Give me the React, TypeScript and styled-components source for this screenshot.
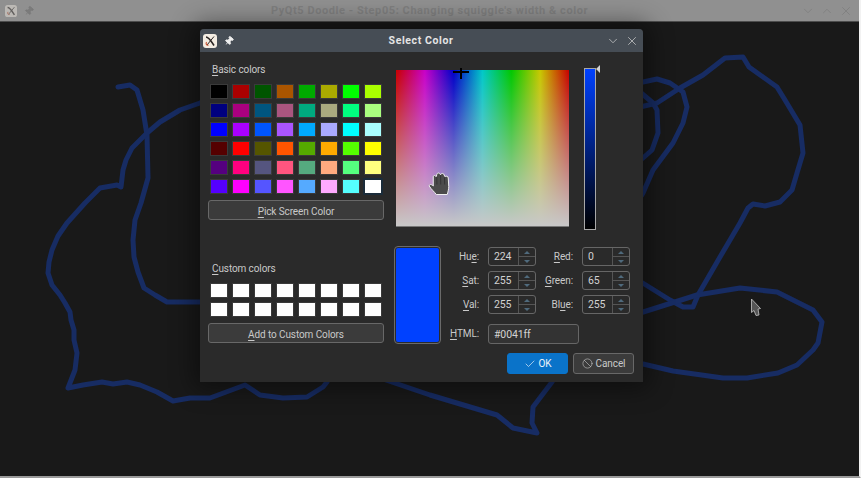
import React from 'react'
import styled, { createGlobalStyle } from 'styled-components'
import { Ban, Check, ChevronDown, ChevronUp, Pin, X } from 'lucide-react'

const GlobalStyle = createGlobalStyle`
  html, body {
    margin: 0;
    padding: 0;
    background: #191919;
    font-family: Roboto, "Liberation Sans", sans-serif;
  }
`

const Page = styled.div`
  width: 861px;
  height: 478px;
  box-sizing: border-box;
  display: flex;
  flex-direction: column;
  overflow: hidden;
  border-right: 2px solid #f2f2f2;
  border-bottom: 2px solid #9a9a9a;
`

const MainBar = styled.div`
  height: 22px;
  flex: none;
  box-sizing: border-box;
  display: grid;
  grid-template-columns: 1fr auto 1fr;
  align-items: center;
  padding: 0 5px;
  background: #909090;
  border-bottom: 1px solid #4d4d4d;
`

const BarLeft = styled.div`
  display: flex;
  align-items: center;
  gap: 7px;
`

const BarRight = styled.div`
  display: flex;
  justify-content: flex-end;
  gap: 5px;
  color: #7b7b7b;
  padding-right: 1px;
`

const MainTitle = styled.div`
  font-size: 11px;
  font-weight: 700;
  letter-spacing: 0.57px;
  color: #7f7f7f;
  white-space: nowrap;
`

const Canvas = styled.div`
  position: relative;
  flex: 1;
  background: #191919;
`

const Scribble = styled.svg`
  position: absolute;
  inset: 0;
  width: 100%;
  height: 100%;
  fill: none;
  stroke: #172c63;
  stroke-width: 5;
  stroke-linejoin: round;
  stroke-linecap: round;
`

const ArrowCursor = styled.svg`
  position: absolute;
  left: 750px;
  top: 276px;
  width: 12px;
  height: 19px;
`

const Dialog = styled.div`
  position: absolute;
  left: 200px;
  top: 7px;
  width: 443px;
  height: 353px;
  background: #2a2a2a;
  border-radius: 4px 4px 0 0;
  box-shadow: 0 0 24px 6px rgba(0, 0, 0, 0.45);
  color: #c9c9c9;
  font-size: 10px;
  letter-spacing: -0.1px;
`

const DialogBar = styled.div`
  height: 23px;
  display: grid;
  grid-template-columns: 1fr auto 1fr;
  align-items: center;
  padding: 0 4px 0 3px;
  background: #464d55;
  border-radius: 4px 4px 0 0;
`

const DialogTitle = styled.div`
  font-size: 10.5px;
  font-weight: 700;
  letter-spacing: 0.6px;
  color: #e4e4e4;
`

const DialogButtons = styled.div`
  display: flex;
  justify-content: flex-end;
  gap: 5px;
  color: #d6d6d6;
`

const DialogBody = styled.div`
  display: flex;
  gap: 10px;
  padding-left: 8px;
`

const LeftColumn = styled.div`
  width: 176px;
  display: flex;
  flex-direction: column;
  padding-top: 10px;
`

const GroupLabel = styled.div<{ $top?: number }>`
  height: 14px;
  line-height: 15px;
  padding-left: 4px;
  margin-top: ${(p) => p.$top ?? 0}px;
  margin-bottom: 9px;
`

const SwatchGrid = styled.div`
  display: grid;
  grid-template-columns: repeat(8, 16px);
  grid-auto-rows: 13px;
  gap: 6px;
  padding-left: 3px;
`

const Swatch = styled.div<{ $color: string; $selected?: boolean }>`
  background: ${(p) => p.$color};
  outline: ${(p) => (p.$selected ? '2px solid #1b2c3a' : 'none')};
  box-shadow: 0 0 0 1px rgba(255, 255, 255, 0.08);
`

const PushButton = styled.div<{ $top: number }>`
  height: 20px;
  box-sizing: border-box;
  margin-top: ${(p) => p.$top}px;
  display: flex;
  align-items: center;
  justify-content: center;
  padding-top: 2px;
  background: #3b3b3b;
  border: 1px solid #686868;
  border-radius: 3px;
`

const Mn = styled.span`
  text-decoration: underline;
  text-underline-offset: 2px;
  text-decoration-thickness: 1px;
`

const RightColumn = styled.div`
  width: 240px;
  padding-top: 16px;
`

const PickerRow = styled.div`
  height: 162px;
  display: flex;
  padding-left: 2px;
`

const Field = styled.div`
  position: relative;
  width: 173px;
  height: 157px;
  margin-top: 2px;
  box-sizing: border-box;
  border-bottom: 1px solid #777;
  background: linear-gradient(to bottom, rgba(200, 200, 200, 0) 0%, #c8c8c8 100%),
    linear-gradient(
      to right,
      #c80000 0%,
      #c800c8 16.66%,
      #0000c8 33.33%,
      #00c8c8 50%,
      #00c800 66.66%,
      #c8c800 83.33%,
      #c80000 100%
    );
`

const Crosshair = styled.div`
  position: absolute;
  left: 57px;
  top: -2px;
  width: 16px;
  height: 11px;

  &::before,
  &::after {
    content: '';
    position: absolute;
    background: #000;
  }
  &::before {
    left: 0;
    right: 0;
    top: 3px;
    height: 2px;
  }
  &::after {
    left: 7px;
    top: 0;
    bottom: 0;
    width: 2px;
  }
`

const HandCursor = styled.svg`
  position: absolute;
  left: 32px;
  top: 102px;
  width: 22px;
  height: 23px;
`

const ValueBar = styled.div`
  position: relative;
  width: 12px;
  height: 162px;
  box-sizing: border-box;
  margin-left: 15px;
  border: 1px solid #a8a8a8;
  background: linear-gradient(to bottom, #0041ff 0%, #000 100%);

  &::after {
    content: '';
    position: absolute;
    right: -5px;
    top: -4px;
    border-style: solid;
    border-width: 4px 4px 4px 0;
    border-color: transparent #d4d4d4 transparent transparent;
  }
`

const MiddleRow = styled.div`
  display: flex;
  gap: 9px;
  margin-top: 16px;
`

const Preview = styled.div`
  width: 47px;
  height: 98px;
  box-sizing: border-box;
  background: #0041ff;
  border: 2px solid #2a2a2a;
  outline: 1px solid #6a6a6a;
  outline-offset: -1px;
  border-radius: 4px;
`

const Fields = styled.div`
  display: grid;
  grid-template-columns: 29px 48px 28px 48px;
  grid-auto-rows: 19px;
  column-gap: 9px;
  row-gap: 5px;
  margin-top: 1px;
`

const FieldLabel = styled.div<{ $nudge?: boolean }>`
  justify-self: end;
  align-self: center;
  white-space: nowrap;
  margin-top: ${(p) => (p.$nudge ? 10 : 0)}px;
`

const Spin = styled.div`
  display: flex;
  box-sizing: border-box;
  border: 1px solid #666;
  border-radius: 3px;
`

const SpinValue = styled.div`
  flex: 1;
  display: flex;
  align-items: center;
  padding-left: 5px;
  color: #d2d2d2;
  font-size: 10.5px;
`

const SpinArrows = styled.div`
  width: 16px;
  display: flex;
  flex-direction: column;
  border-left: 1px solid #555;
`

const SpinArrow = styled.div<{ $down?: boolean }>`
  flex: 1;
  display: flex;
  align-items: center;
  justify-content: center;
  border-top: ${(p) => (p.$down ? '1px solid #555' : 'none')};

  &::after {
    content: '';
    border-left: 3px solid transparent;
    border-right: 3px solid transparent;
    ${(p) => (p.$down ? 'border-top: 3px solid #4f6a7d;' : 'border-bottom: 3px solid #4f6a7d;')}
  }
`

const HtmlInput = styled.div`
  grid-column: span 3;
  width: 91px;
  height: 20px;
  margin-top: 5px;
  box-sizing: border-box;
  display: flex;
  align-items: center;
  padding-left: 5px;
  background: #333;
  border: 1px solid #666;
  border-radius: 3px;
  color: #d2d2d2;
  font-size: 10.5px;
`

const ActionRow = styled.div`
  display: flex;
  justify-content: flex-end;
  gap: 5px;
  margin-top: 9px;
`

const ActionButton = styled.div<{ $primary?: boolean }>`
  width: 61px;
  height: 21px;
  box-sizing: border-box;
  display: flex;
  align-items: center;
  justify-content: center;
  gap: 3px;
  border-radius: 3px;
  background: ${(p) => (p.$primary ? '#0a73c9' : '#3b3b3b')};
  border: 1px solid ${(p) => (p.$primary ? '#0a73c9' : '#686868')};
  color: ${(p) => (p.$primary ? '#eef4fa' : '#c9c9c9')};
`

const LogoBox = styled.svg<{ $dim?: boolean }>`
  display: block;
  opacity: ${(p) => (p.$dim ? 0.45 : 1)};
`

const PinIcon = styled(Pin)<{ $dim?: boolean }>`
  display: block;
  transform: rotate(40deg);
  color: ${(p) => (p.$dim ? '#7b7b7b' : '#eeeeee')};
  fill: currentColor;
`

const Logo = ({ size, dim }: { size: number; dim?: boolean }) => (
  <LogoBox $dim={dim} width={size} height={size} viewBox="0 0 14 14">
    <rect x="0" y="0" width="14" height="14" rx="3" fill="#f3ece2" />
    <path d="M3 3 C6 3 8 7 11 11.5" fill="none" stroke="#2a2422" strokeWidth="1.7" />
    <path d="M11 2.5 L4 11" fill="none" stroke="#2a2422" strokeWidth="1" />
    <path d="M3.5 8 C2.5 10 3.5 11.5 5.5 11" fill="none" stroke="#c8502f" strokeWidth="1.1" />
  </LogoBox>
)

const basicColors = [
  '#000000', '#aa0000', '#005500', '#aa5500', '#00aa00', '#aaaa00', '#00ff00', '#aaff00',
  '#00007f', '#aa007f', '#00557f', '#aa557f', '#00aa7f', '#aaaa7f', '#00ff7f', '#aaff7f',
  '#0000ff', '#aa00ff', '#0055ff', '#aa55ff', '#00aaff', '#aaaaff', '#00ffff', '#aaffff',
  '#550000', '#ff0000', '#555500', '#ff5500', '#55aa00', '#ffaa00', '#55ff00', '#ffff00',
  '#55007f', '#ff007f', '#55557f', '#ff557f', '#55aa7f', '#ffaa7f', '#55ff7f', '#ffff7f',
  '#5500ff', '#ff00ff', '#5555ff', '#ff55ff', '#55aaff', '#ffaaff', '#55ffff', '#ffffff',
]

// what the user drew, in page coordinates
const strokes = [
  '118,87 130,85 137,90 143,110 147,135 148,178 141,203 135,220 133,240 134,257 138,272 144,288 155,295 167,302 240,302',
  '240,90 200,103 180,110 160,122 147,133 132,148 126,160 123,170 121,187 117,185 100,188 93,195 85,203 67,223 58,236 52,250 49,262 48,273 52,285 60,295 65,303 70,312 71,320 74,330 74,340 77,353 75,370 68,388 83,385 102,382 113,384 127,382 140,385 157,392 173,401 190,398 210,398 245,385 260,395 283,398 307,397 323,387 327,382 335,365',
  '380,378 430,395 497,415 513,428 537,433 532,423 533,407 552,382 575,345',
  '620,118 640,107 657,103 680,88 703,75 725,58 743,57 749,67 777,87 785,100 800,125 803,153 797,173 792,190 780,202 765,206 753,204 748,208 740,223 720,257 698,295 693,307 683,307 670,300 625,272',
  '625,85 643,82 657,79 670,83 683,92 687,107 683,123 673,143 653,170 643,193 625,220',
  '625,78 640,92 653,103 657,110 658,133 652,150 643,158 625,168',
  '625,320 640,313 697,295 740,288 777,292 813,310 822,322 818,343 813,350 797,365 778,373 747,378 723,378 673,371 643,364 625,358',
]

const App = () => {
  const spinRows: [React.ReactNode, string, React.ReactNode, string][] = [
    [<>Hu<Mn>e</Mn>:</>, '224', <><Mn>R</Mn>ed:</>, '0'],
    [<><Mn>S</Mn>at:</>, '255', <><Mn>G</Mn>reen:</>, '65'],
    [<><Mn>V</Mn>al:</>, '255', <>Bl<Mn>u</Mn>e:</>, '255'],
  ]

  const renderSpin = (value: string) => (
    <Spin>
      <SpinValue>{value}</SpinValue>
      <SpinArrows>
        <SpinArrow />
        <SpinArrow $down />
      </SpinArrows>
    </Spin>
  )

  return (
    <Page>
      <GlobalStyle />
      <MainBar>
        <BarLeft>
          <Logo size={12} dim />
          <PinIcon $dim size={10} />
        </BarLeft>
        <MainTitle>PyQt5 Doodle - Step05: Changing squiggle's width &amp; color</MainTitle>
        <BarRight>
          <ChevronDown size={14} strokeWidth={1.2} />
          <ChevronUp size={14} strokeWidth={1.2} />
          <X size={14} strokeWidth={1.2} />
        </BarRight>
      </MainBar>

      <Canvas>
        <Scribble viewBox="0 22 859 454">
          {strokes.map((points) => (
            <polyline key={points} points={points} />
          ))}
        </Scribble>
        <ArrowCursor viewBox="0 0 12 19">
          <path d="M1.5 1 L10.5 10.5 L8 11 L9 17 L6 17.5 L4 12.5 L1.5 14.5 Z" fill="#555" stroke="#c4c4c4" strokeWidth="0.8" />
        </ArrowCursor>

        <Dialog>
          <DialogBar>
            <BarLeft>
              <Logo size={14} />
              <PinIcon size={10} />
            </BarLeft>
            <DialogTitle>Select Color</DialogTitle>
            <DialogButtons>
              <ChevronDown size={14} strokeWidth={1.2} />
              <X size={14} strokeWidth={1.2} />
            </DialogButtons>
          </DialogBar>

          <DialogBody>
            <LeftColumn>
              <GroupLabel><Mn>B</Mn>asic colors</GroupLabel>
              <SwatchGrid>
                {basicColors.map((color, i) => (
                  <Swatch key={color} $color={color} $selected={i === basicColors.length - 1} />
                ))}
              </SwatchGrid>
              <PushButton $top={7}><span><Mn>P</Mn>ick Screen Color</span></PushButton>
              <GroupLabel $top={41}><Mn>C</Mn>ustom colors</GroupLabel>
              <SwatchGrid>
                {Array.from({ length: 16 }, (_, i) => (
                  <Swatch key={i} $color="#ffffff" />
                ))}
              </SwatchGrid>
              <PushButton $top={7}><span><Mn>A</Mn>dd to Custom Colors</span></PushButton>
            </LeftColumn>

            <RightColumn>
              <PickerRow>
                <Field>
                  <Crosshair />
                  <HandCursor viewBox="0.5 0.5 20.5 23">
                    <path
                      d="M8 23 C6 20 3 18 1 14.5 C1 12.5 3 12.5 5 14.5 L5 5.5 C5 3.5 7.5 3.5 8 5.5 L8.5 3 C9 1 11.5 1 12 3 L12.5 3 C13 1.5 15.5 1.5 16 3.5 L16.5 5.5 C17.5 4 20 4.5 20 6.5 L20.5 15 C20.5 18 19.5 21 19 23 Z"
                      fill="#4b4b4b"
                      stroke="#f0f0f0"
                      strokeWidth="1"
                    />
                    <path d="M8.5 5 L8.7 13 M12.3 3.5 L12.5 13 M16.2 5 L16.4 13" stroke="#2e2e2e" strokeWidth="0.8" fill="none" />
                  </HandCursor>
                </Field>
                <ValueBar />
              </PickerRow>

              <MiddleRow>
                <Preview />
                <Fields>
                  {spinRows.map(([leftLabel, leftValue, rightLabel, rightValue], i) => (
                    <React.Fragment key={i}>
                      <FieldLabel>{leftLabel}</FieldLabel>
                      {renderSpin(leftValue)}
                      <FieldLabel>{rightLabel}</FieldLabel>
                      {renderSpin(rightValue)}
                    </React.Fragment>
                  ))}
                  <FieldLabel $nudge><Mn>H</Mn>TML:</FieldLabel>
                  <HtmlInput>#0041ff</HtmlInput>
                </Fields>
              </MiddleRow>

              <ActionRow>
                <ActionButton $primary><Check size={12} strokeWidth={1.3} />OK</ActionButton>
                <ActionButton><Ban size={11} strokeWidth={1.3} />Cancel</ActionButton>
              </ActionRow>
            </RightColumn>
          </DialogBody>
        </Dialog>
      </Canvas>
    </Page>
  )
}

export default App
